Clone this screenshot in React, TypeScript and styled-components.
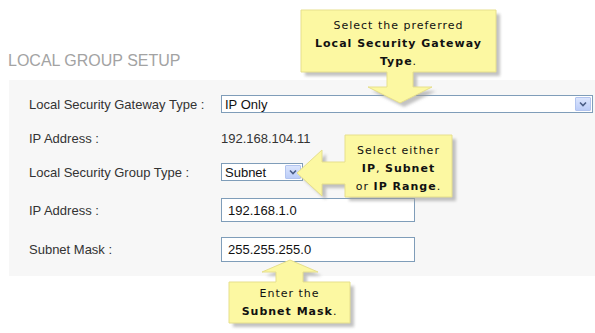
import { createGlobalStyle, styled } from "styled-components"

const Global = createGlobalStyle`
    html, body {
        margin: 0;
        padding: 0;
        background: #ffffff;
    }
`

const Page = styled.div`
    position: relative;
    width: 595px;
    height: 333px;
    overflow: hidden;
    padding-top: 51px;
    box-sizing: border-box;
    font-family: 'Liberation Sans', Arial, sans-serif;
    background: #ffffff;
`

const Title = styled.h2`
    margin: 0 0 9px 0;
    padding-left: 8px;
    font-size: 16px;
    line-height: 20px;
    font-weight: normal;
    color: #a3a3a3;
`

const Panel = styled.div`
    margin-left: 9px;
    width: 586px;
    background: #f7f7f7;
    padding: 7px 0 9px 20px;
    box-sizing: border-box;
`

const Row = styled.div<{ $h: number }>`
    display: flex;
    align-items: center;
    height: ${p => p.$h}px;
    font-size: 13px;
    color: #333333;
`

const Label = styled.div`
    width: 192px;
    flex: none;
`

const Value = styled.div`
    color: #333333;
`

const SelectBox = styled.div<{ $w: number; $h: number }>`
    position: relative;
    display: flex;
    align-items: center;
    width: ${p => p.$w}px;
    height: ${p => p.$h}px;
    box-sizing: border-box;
    border: 1px solid #7f9db9;
    background: #ffffff;
    padding-left: 3px;
    color: #111111;
`

const SelectText = styled.span`
    flex: 1;
`

const DropButton = styled.div`
    width: 16px;
    height: calc(100% - 2px);
    margin-right: 1px;
    box-sizing: border-box;
    border: 1px solid #b2c4ef;
    border-radius: 1px;
    background: linear-gradient(#dbe5fd, #bccdf8);
    display: flex;
    align-items: center;
    justify-content: center;
`

const TextInput = styled.div<{ $h: number }>`
    width: 194px;
    height: ${p => p.$h}px;
    box-sizing: border-box;
    border: 1px solid #7f9db9;
    background: #ffffff;
    padding-left: 6px;
    display: flex;
    align-items: center;
    color: #111111;
`

const Layer = styled.svg`
    position: absolute;
    left: 0;
    top: 0;
    width: 595px;
    height: 333px;
    pointer-events: none;
`

const Note = styled.div<{ $x: number; $y: number; $w: number }>`
    position: absolute;
    left: ${p => p.$x}px;
    top: ${p => p.$y}px;
    width: ${p => p.$w}px;
    text-align: center;
    font-family: 'DejaVu Sans', Verdana, sans-serif;
    font-size: 11px;
    letter-spacing: 1px;
    line-height: 18px;
    color: #111111;

    b {
        font-weight: bold;
    }
`

const shapes = [
    "M301,10 H496 V72 H413 V87 H432 L400,103 L368,87 H387 V72 H301 Z",
    "M345,135 H452 V197 H345 V184 H322 V196 L297,173 L322,150 V162 H345 Z",
    "M229,282 H276 V272 H262 L290,260 L318,272 H303 V282 H350 V323 H229 Z",
]

const Chevron = () => (
    <svg width="8" height="6" viewBox="0 0 8 6">
        <path d="M1,1.5 L4,4.5 L7,1.5" fill="none" stroke="#4a5d86" strokeWidth="1.6" />
    </svg>
)

export default function App() {
    return <>
        <Global />
        <Page>
            <Title>LOCAL GROUP SETUP</Title>
            <Panel>
                <Row $h={34}>
                    <Label>Local Security Gateway Type :</Label>
                    <SelectBox $w={372} $h={18}>
                        <SelectText>IP Only</SelectText>
                        <DropButton><Chevron /></DropButton>
                    </SelectBox>
                </Row>
                <Row $h={34}>
                    <Label>IP Address :</Label>
                    <Value>192.168.104.11</Value>
                </Row>
                <Row $h={34}>
                    <Label>Local Security Group Type :</Label>
                    <SelectBox $w={82} $h={18}>
                        <SelectText>Subnet</SelectText>
                        <DropButton><Chevron /></DropButton>
                    </SelectBox>
                </Row>
                <Row $h={42}>
                    <Label>IP Address :</Label>
                    <TextInput $h={24}>192.168.1.0</TextInput>
                </Row>
                <Row $h={36}>
                    <Label>Subnet Mask :</Label>
                    <TextInput $h={25}>255.255.255.0</TextInput>
                </Row>
            </Panel>

            <Layer viewBox="0 0 595 333">
                <defs>
                    <filter id="soft" x="-10%" y="-10%" width="120%" height="130%">
                        <feGaussianBlur stdDeviation="1.5" />
                    </filter>
                </defs>
                {shapes.map((d, i) => (
                    <g key={i}>
                        <path d={d} transform="translate(4,4)" fill="#9a9a9a" opacity="0.6" filter="url(#soft)" />
                        <path d={d} fill="#fcf8a2" stroke="#e6df8c" strokeWidth="1" />
                    </g>
                ))}
            </Layer>

            <Note $x={301} $y={17} $w={195}>
                Select the preferred<br />
                <b>Local Security Gateway</b><br />
                <b>Type</b>.
            </Note>
            <Note $x={345} $y={142} $w={107}>
                Select either<br />
                <b>IP</b>, <b>Subnet</b><br />
                or <b>IP Range</b>.
            </Note>
            <Note $x={229} $y={285} $w={121}>
                Enter the<br />
                <b>Subnet Mask</b>.
            </Note>
        </Page>
    </>
}
